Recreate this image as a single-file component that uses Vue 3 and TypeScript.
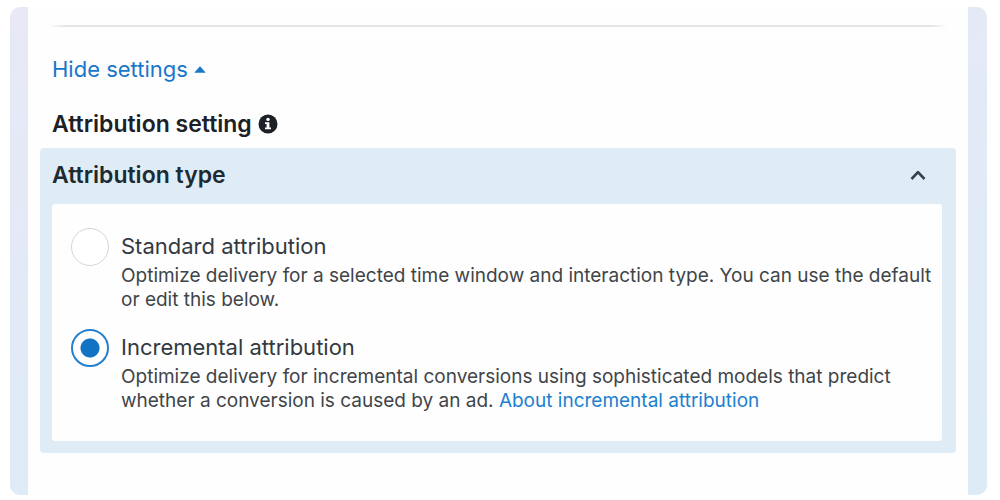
<script setup lang="ts">
import { ref } from 'vue'

interface AttributionOption {
  id: string
  title: string
  description: string
  link?: string
}

const options: AttributionOption[] = [
  {
    id: 'standard',
    title: 'Standard attribution',
    description:
      'Optimize delivery for a selected time window and interaction type. You can use the default or edit this below.',
  },
  {
    id: 'incremental',
    title: 'Incremental attribution',
    description:
      'Optimize delivery for incremental conversions using sophisticated models that predict whether a conversion is caused by an ad.',
    link: 'About incremental attribution',
  },
]

const selected = ref('incremental')
const settingsOpen = ref(true)
const typeOpen = ref(true)
</script>

<template>
  <main class="frame">
    <div class="sheet">
      <hr class="divider" />
      <button class="toggle" type="button" :aria-expanded="settingsOpen" @click="settingsOpen = !settingsOpen">
        <span>{{ settingsOpen ? 'Hide' : 'Show' }} settings</span>
        <svg class="caret" :class="{ flipped: !settingsOpen }" viewBox="0 0 12 7" aria-hidden="true">
          <path d="M.3 6.8 5.2 1Q6 .2 6.8 1L11.7 6.8Z" fill="currentColor" />
        </svg>
      </button>

      <template v-if="settingsOpen">
        <h2 class="heading">
          <span>Attribution setting</span>
          <svg class="info" viewBox="0 0 20 20" aria-hidden="true">
            <circle cx="10" cy="10" r="9.5" fill="#1c2127" />
            <circle cx="10" cy="5.4" r="1.7" fill="#fff" />
            <path d="M7 8.2h4.4v5.2h1.6v1.8H7v-1.8h1.6V10H7Z" fill="#fff" />
          </svg>
        </h2>

        <section class="panel">
          <button class="panel-head" type="button" :aria-expanded="typeOpen" @click="typeOpen = !typeOpen">
            <span>Attribution type</span>
            <svg class="chevron" :class="{ flipped: !typeOpen }" viewBox="0 0 16 12" aria-hidden="true">
              <path d="m1.5 10 6.5-6.8 6.5 6.8" fill="none" stroke="#35414b" stroke-width="2.6" stroke-linejoin="round" />
            </svg>
          </button>

          <div v-if="typeOpen" class="card" role="radiogroup" aria-label="Attribution type">
            <div v-for="option in options" :key="option.id" class="option">
              <input :id="option.id" v-model="selected" class="radio" type="radio" name="attribution" :value="option.id" />
              <div class="copy">
                <label class="title" :for="option.id">{{ option.title }}</label>
                <p class="description">
                  {{ option.description }}
                  <a v-if="option.link" href="#about">{{ option.link }}</a>
                </p>
              </div>
            </div>
          </div>
        </section>
      </template>
    </div>
  </main>
</template>

<style>
body {
  background: #fff;
}
</style>

<style scoped>
.frame {
  box-sizing: border-box;
  min-height: calc(100vh - 12px);
  margin: 7px 13px 5px 10px;
  padding: 0 19px 0 18px;
  display: flex;
  border-radius: 10px;
  background: linear-gradient(170deg, #e8e8f6 0%, #e1eaf6 50%, #dcebf6 100%);
  color: #1c2b33;
  font-family: Inter, "Liberation Sans", sans-serif;
}

.sheet {
  flex: 1;
  min-width: 0;
  padding: 18px 12px 24px;
  display: flex;
  flex-direction: column;
  background: #fefefe;
}

button {
  border: 0;
  background: none;
  font: inherit;
  cursor: pointer;
}

.divider {
  width: calc(100% - 16px);
  height: 2px;
  margin: 0 auto;
  border: 0;
  background: linear-gradient(90deg, #e3e4e600, #e3e4e6 2%, #e3e4e6 98%, #e3e4e600);
}

.toggle {
  align-self: flex-start;
  margin-top: 26px;
  padding: 0 12px;
  display: flex;
  align-items: center;
  gap: 6px;
  color: #1877c9;
  font-size: 22px;
  line-height: 32px;
}

.caret {
  width: 12px;
  height: 7px;
}

.flipped {
  transform: rotate(180deg);
}

.heading {
  margin: 23px 0 8px;
  padding: 0 12px;
  display: flex;
  align-items: center;
  gap: 6px;
  color: #1c2127;
  font-size: 23px;
  font-weight: 600;
  line-height: 32px;
}

.info {
  width: 20px;
  height: 20px;
}

.panel {
  padding: 0 14px 12px 12px;
  border-radius: 4px;
  background: #dfecf5;
}

.panel-head {
  width: 100%;
  padding: 11px 16px 13px 0;
  display: flex;
  align-items: center;
  justify-content: space-between;
  color: #1c2b33;
  font-size: 23px;
  font-weight: 600;
  line-height: 32px;
}

.chevron {
  width: 16px;
  height: 12px;
}

.card {
  padding: 24px 8px 28px 19px;
  display: flex;
  flex-direction: column;
  gap: 17px;
  border-radius: 3px;
  background: #fefefe;
}

.option {
  display: flex;
  align-items: flex-start;
  gap: 12px;
}

.radio {
  appearance: none;
  box-sizing: border-box;
  flex: none;
  width: 38px;
  height: 38px;
  margin: 0;
  border: 1px solid #d3d6d9;
  border-radius: 50%;
  background: #fff;
}

.radio:checked {
  border: 2px solid #2580cd;
  background: radial-gradient(circle, #1272c4 9px, #fff 10px);
}

.copy {
  flex: 1;
  min-width: 0;
}

.title {
  display: block;
  color: #33393e;
  font-size: 22px;
  line-height: 36px;
}

.description {
  margin: 0;
  color: #3f4549;
  font-size: 19px;
  line-height: 24px;
}

a {
  color: #2080cf;
  text-decoration: none;
}
</style>
